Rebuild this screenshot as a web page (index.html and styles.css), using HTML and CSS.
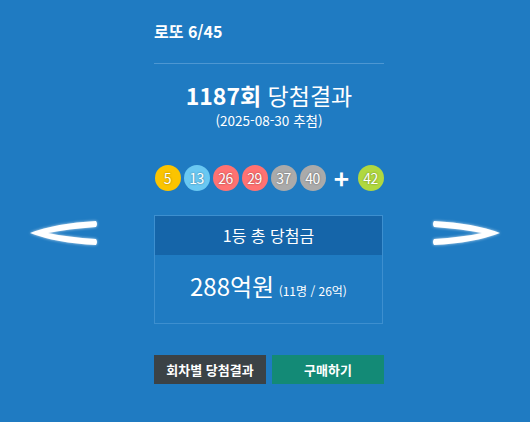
FILE: index.html
```html
<!DOCTYPE html>
<html lang="ko">
<head>
  <meta charset="UTF-8" />
  <meta name="viewport" content="width=device-width, initial-scale=1" />
  <title>로또 6/45</title>
  <link rel="stylesheet" href="styles.css">
</head>
<body>
  <div class="wrap">
    <a class="nav-arrow" href="#">
      <svg width="68" height="26" viewBox="0 0 68 26">
        <path d="M0 13 Q26 3 66 1 Q68 4 66 7 Q38 9 18 13 Q38 17 66 19 Q68 22 66 25 Q26 23 0 13 Z" fill="#fff" />
      </svg>
    </a>

    <div class="win-result">
      <div class="game-name">로또 6/45</div>

      <h2 class="round-title"><strong>1187회</strong> 당첨결과</h2>
      <p class="draw-date">(2025-08-30 추첨)</p>

      <div class="balls">
        <span class="ball ball-y">5</span>
        <span class="ball ball-b">13</span>
        <span class="ball ball-r">26</span>
        <span class="ball ball-r">29</span>
        <span class="ball ball-g">37</span>
        <span class="ball ball-g">40</span>
        <span class="plus">+</span>
        <span class="ball ball-l">42</span>
      </div>

      <div class="prize-box">
        <div class="prize-head">1등 총 당첨금</div>
        <div class="prize-body">
          <strong>288억원</strong> <span>(11명 / 26억)</span>
        </div>
      </div>

      <div class="btns">
        <a class="btn btn-dark" href="#">회차별 당첨결과</a>
        <a class="btn btn-green" href="#">구매하기</a>
      </div>
    </div>

    <a class="nav-arrow" href="#">
      <svg width="68" height="26" viewBox="0 0 68 26">
        <path d="M68 13 Q42 3 2 1 Q0 4 2 7 Q30 9 50 13 Q30 17 2 19 Q0 22 2 25 Q42 23 68 13 Z" fill="#fff" />
      </svg>
    </a>
  </div>
</body>
</html>
```

FILE: styles.css
```css
* {
  box-sizing: border-box;
}

body {
  margin: 0;
  background: #1f7bc2;
  color: #fff;
  font-family: 'Noto Sans CJK KR', 'Noto Sans', sans-serif;
  height: 100vh;
  overflow: hidden;
}

.wrap {
  display: flex;
  justify-content: center;
  padding: 0 30px;
}

.nav-arrow {
  display: block;
  width: 68px;
  height: 26px;
  margin-top: 220px;
  filter: drop-shadow(0 0 1.5px rgba(255, 255, 255, 0.7));
}

.nav-arrow svg {
  display: block;
}

.win-result {
  width: 231px;
  margin: 0 48px 0 56px;
  padding-top: 19px;
}

.game-name {
  font-size: 16px;
  font-weight: bold;
  line-height: 24px;
  padding-bottom: 20px;
  border-bottom: 1px solid #4d97d2;
}

.round-title {
  margin: 15px 0 0;
  text-align: center;
  font-size: 23px;
  line-height: 32px;
  font-weight: normal;
}

.round-title strong {
  font-weight: bold;
}

.draw-date {
  margin: 0;
  text-align: center;
  font-size: 13.5px;
  line-height: 18px;
}

.balls {
  display: flex;
  align-items: center;
  justify-content: center;
  gap: 3px;
  margin-top: 36px;
}

.ball {
  width: 26px;
  height: 26px;
  border-radius: 50%;
  display: flex;
  align-items: center;
  justify-content: center;
  font-size: 14px;
  color: #fff;
  text-shadow: 0 0 2px rgba(0, 0, 0, 0.45);
  letter-spacing: -0.5px;
}

.ball-y { background: #fbc400; }
.ball-b { background: #69c8f2; }
.ball-r { background: #ff7272; }
.ball-g { background: #aaaaaa; }
.ball-l { background: #b0d840; }

.plus {
  width: 26px;
  text-align: center;
  font-size: 26px;
  font-weight: bold;
  line-height: 26px;
}

.prize-box {
  margin-top: 24px;
  width: 229px;
  border: 1px solid #3d8fcf;
}

.prize-head {
  background: #1565a9;
  text-align: center;
  font-size: 16px;
  line-height: 39px;
}

.prize-body {
  text-align: center;
  padding: 14px 0 15px;
  line-height: 34px;
}

.prize-body strong {
  font-size: 24px;
  font-weight: normal;
  line-height: 34px;
}

.prize-body span {
  font-size: 12px;
  line-height: 34px;
}

.btns {
  display: flex;
  gap: 6px;
  margin-top: 31px;
}

.btn {
  flex: 1;
  height: 29px;
  display: flex;
  align-items: center;
  justify-content: center;
  font-size: 13px;
  font-weight: bold;
  color: #fff;
  text-decoration: none;
}

.btn-dark {
  background: #3b4246;
}

.btn-green {
  background: #138a76;
}
```
